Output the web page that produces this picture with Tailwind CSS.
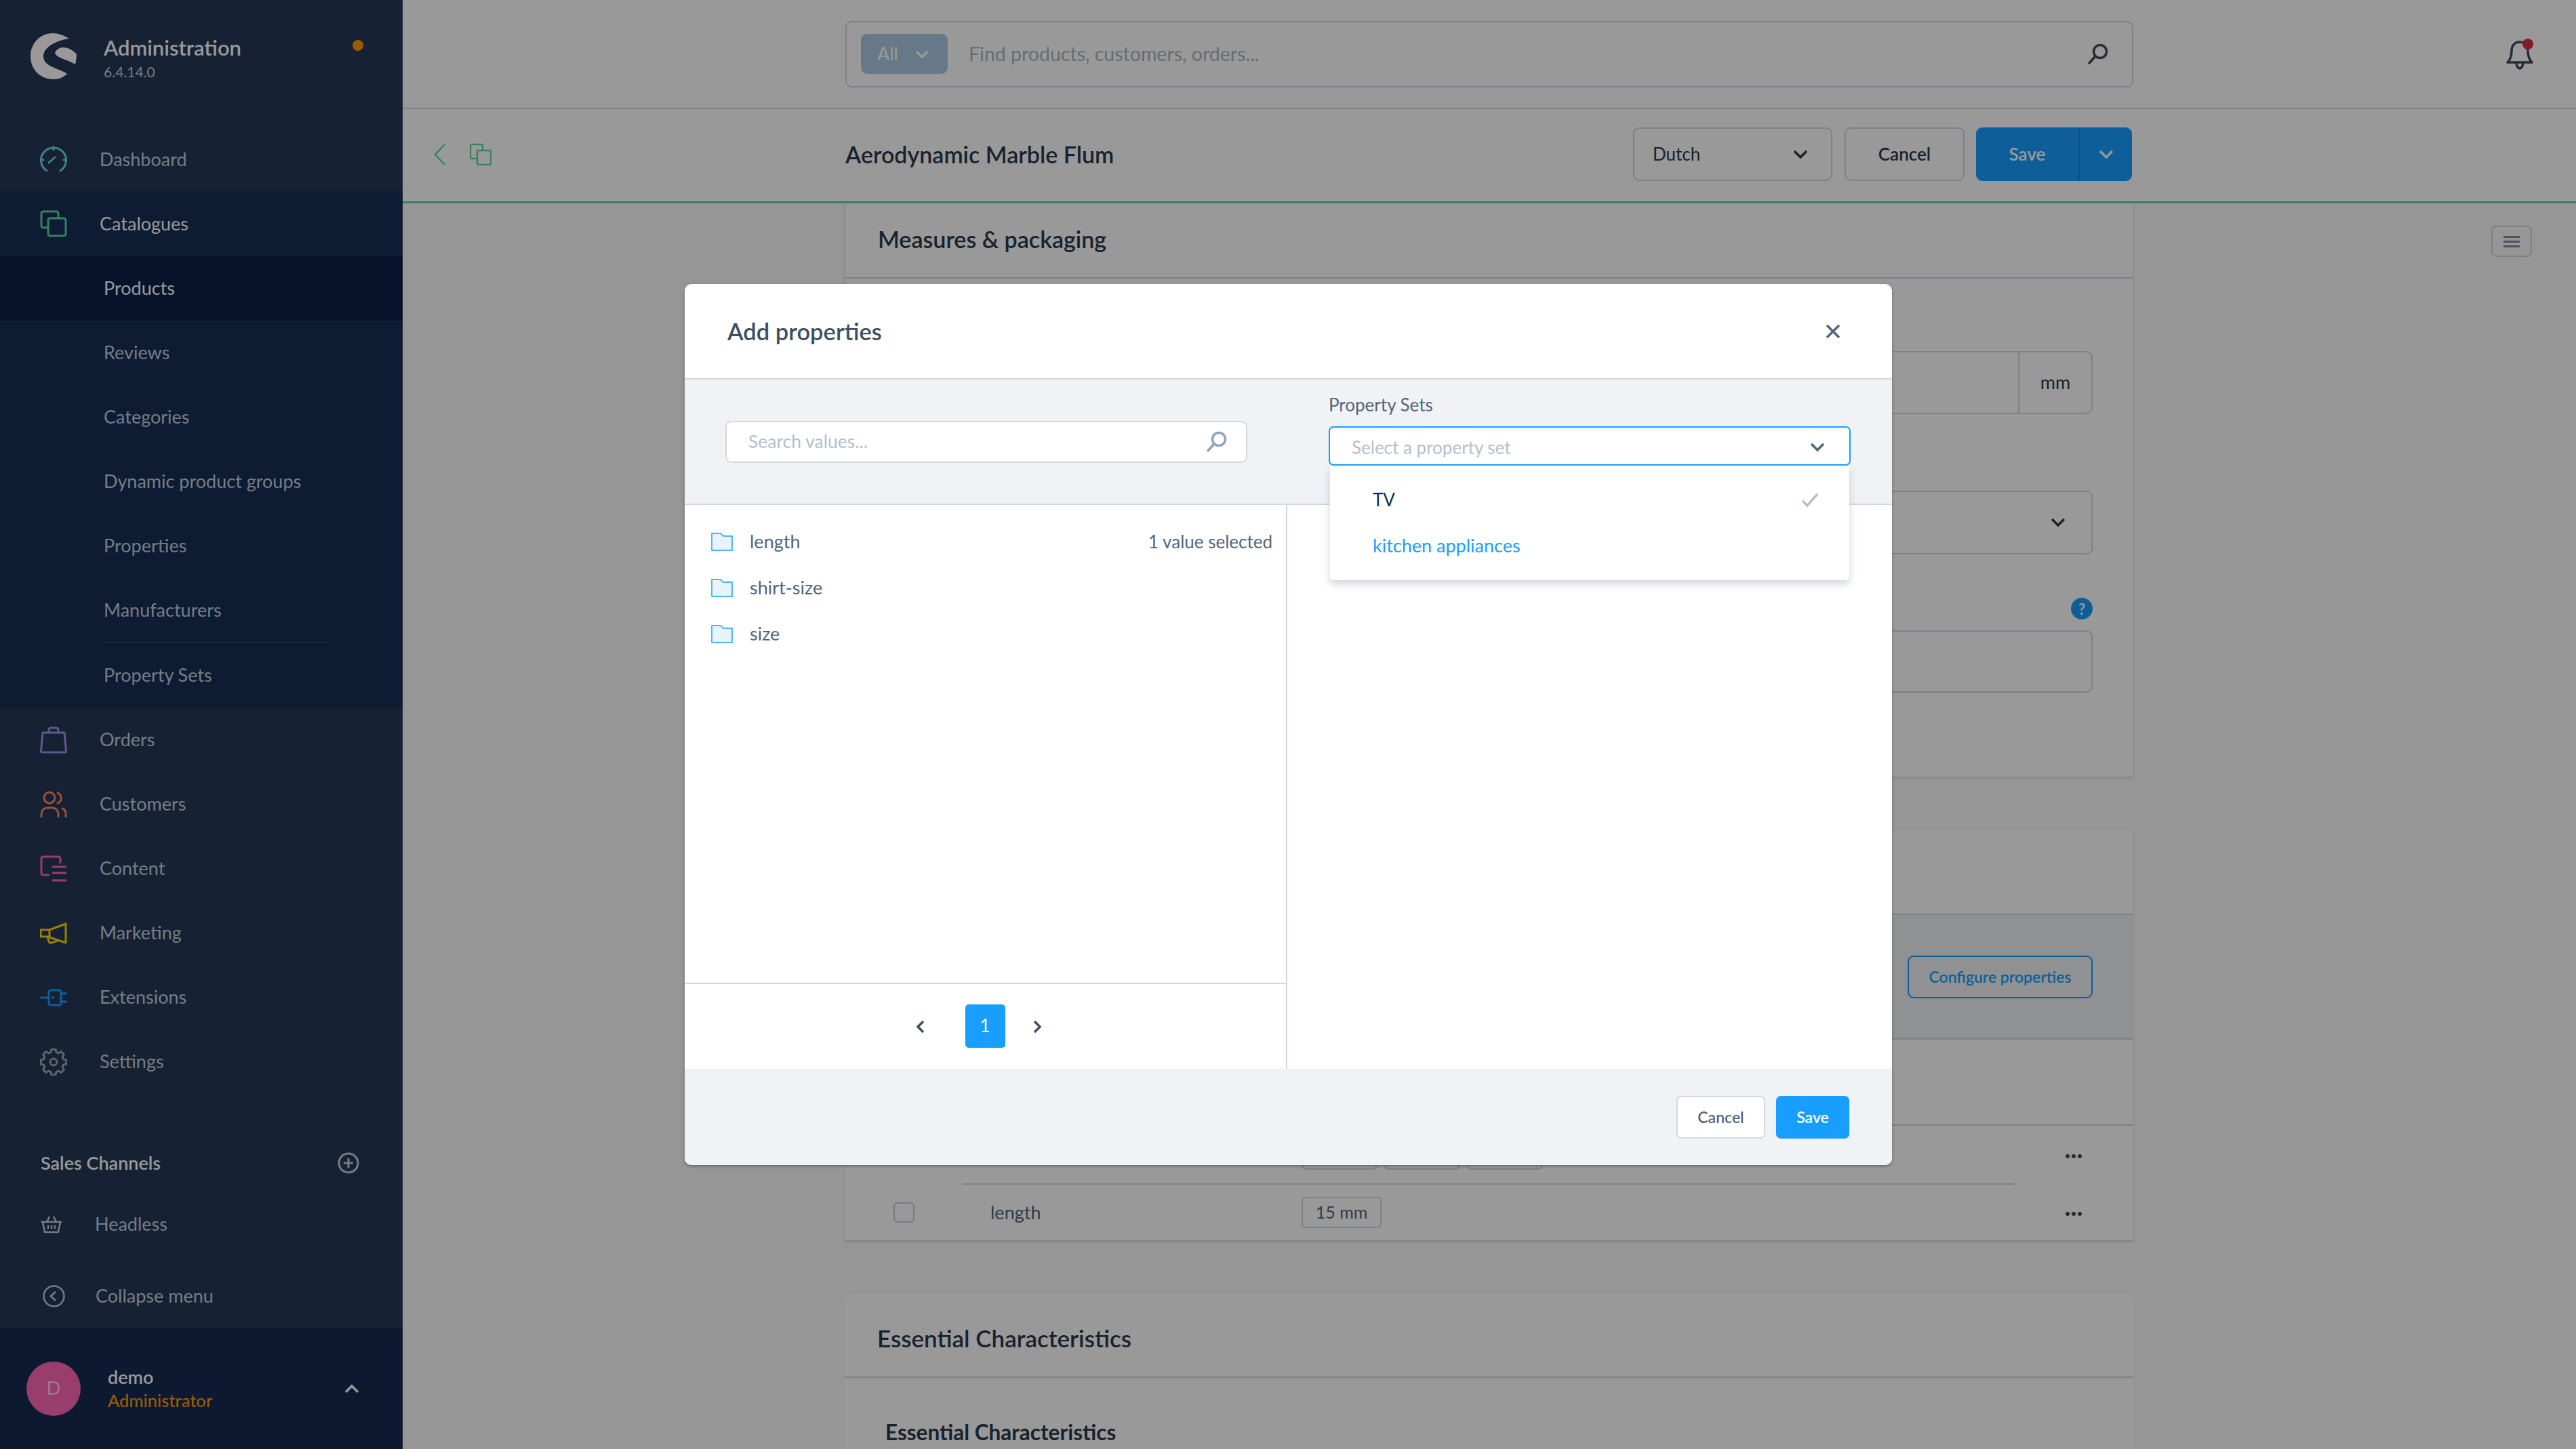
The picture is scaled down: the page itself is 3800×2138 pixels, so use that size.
<!DOCTYPE html>
<html lang="en">
<head>
<meta charset="utf-8">
<title>Add properties</title>
<script src="https://cdn.jsdelivr.net/npm/@tailwindcss/browser@4"></script>
</head>
<body class="m-0">
<div class="relative flex h-[2138px] w-[3800px] overflow-hidden bg-[#fafafa] font-['Lato','Noto_Sans',sans-serif] text-[27px] text-[#52667a]">

  <!-- Sidebar -->
  <aside class="flex h-full w-[594px] shrink-0 flex-col bg-[#253857] text-[27px] text-[#c2d0e0]">
    <div class="flex h-[188px] shrink-0 items-start pl-[45px] pr-[58px] pt-[49px]">
      <svg class="h-[68px] w-[68px] shrink-0" viewBox="0 0 68 68" fill="#fff"><path d="M57 8C49 3 41 0 33 0 14 0 0 15 0 34c0 20 15 34 34 34 8 0 15-3 20-8C44 52 19 50 19 34 19 20 40 10 57 8z"/><path d="M36 29c2-5 7-8 12-8 8 0 16 5 20 10 0 5-1 10-2 15-8-6-28-9-30-17z"/></svg>
      <div class="ml-[40px] flex flex-col">
        <span class="mt-[2px] text-[31px] font-semibold leading-[38px] text-white">Administration</span>
        <span class="text-[21px] leading-[34px] text-[#c5ccd6]">6.4.14.0</span>
      </div>
      <span class="ml-auto mt-[10px] h-[16px] w-[16px] rounded-full bg-[#ff9a00]"></span>
    </div>

    <nav class="flex flex-col">
      <div class="flex h-[94px] items-center pl-[59px]">
        <svg class="h-[40px] w-[40px] shrink-0" viewBox="0 0 40 40" fill="none" stroke="#6ad6f0" stroke-width="3" stroke-linecap="round"><path d="M10 37A18.5 18.5 0 1 1 30 37"/><path d="M20 2v4M13 25l9-8M2 21h3M35 21h3"/></svg>
        <span class="ml-[48px]">Dashboard</span>
      </div>
      <div class="bg-[#172d55]">
        <div class="flex h-[96px] items-center pl-[59px] text-white">
          <svg class="h-[40px] w-[40px] shrink-0" viewBox="0 0 40 40" fill="none" stroke="#57d9a3" stroke-width="3" stroke-linejoin="round"><path d="M12 26H5a3 3 0 0 1-3-3V5a3 3 0 0 1 3-3h19a3 3 0 0 1 3 3v7"/><rect x="12" y="12" width="26" height="26" rx="3"/></svg>
          <span class="ml-[48px]">Catalogues</span>
        </div>
        <div class="flex h-[95px] items-center bg-[#0c2149] pl-[153px] text-white">Products</div>
        <div class="flex h-[95px] items-center pl-[153px]">Reviews</div>
        <div class="flex h-[95px] items-center pl-[153px]">Categories</div>
        <div class="flex h-[95px] items-center pl-[153px]">Dynamic product groups</div>
        <div class="flex h-[95px] items-center pl-[153px]">Properties</div>
        <div class="ml-[153px] mr-[108px] flex h-[96px] items-center border-b-2 border-[#2f4468]">Manufacturers</div>
        <div class="flex h-[95px] items-center pl-[153px]">Property Sets</div>
      </div>
      <div class="flex h-[95px] items-center pl-[59px]">
        <svg class="h-[40px] w-[40px] shrink-0" viewBox="0 0 40 40" fill="none" stroke="#a092f0" stroke-width="3" stroke-linejoin="round"><path d="M4 9h32l2.500 27a2 2 0 0 1-2 2H3.500a2 2 0 0 1-2-2z"/><path d="M13 9V5a3 3 0 0 1 3-3h8a3 3 0 0 1 3 3v4"/></svg>
        <span class="ml-[48px]">Orders</span>
      </div>
      <div class="flex h-[95px] items-center pl-[59px]">
        <svg class="h-[40px] w-[40px] shrink-0" viewBox="0 0 40 40" fill="none" stroke="#f88962" stroke-width="3" stroke-linecap="round"><circle cx="14" cy="10" r="8"/><path d="M2 38v-4a9 9 0 0 1 9-9h7a9 9 0 0 1 9 9v4"/><path d="M26 3a8 8 0 0 1 0 15M33 26a8 8 0 0 1 5 8v4"/></svg>
        <span class="ml-[48px]">Customers</span>
      </div>
      <div class="flex h-[95px] items-center pl-[59px]">
        <svg class="h-[40px] w-[40px] shrink-0" viewBox="0 0 40 40" fill="none" stroke="#ff68b4" stroke-width="3" stroke-linejoin="round"><path d="M30 12V5a3 3 0 0 0-3-3H5a3 3 0 0 0-3 3v21a3 3 0 0 0 3 3h9"/><path d="M18 17h21M18 26h21M18 37h21"/></svg>
        <span class="ml-[48px]">Content</span>
      </div>
      <div class="flex h-[95px] items-center pl-[59px]">
        <svg class="h-[40px] w-[40px] shrink-0" viewBox="0 0 40 40" fill="none" stroke="#ffd700" stroke-width="3" stroke-linejoin="round"><path d="M1 15h13v10H1zM14 15l24-9v28l-24-8z"/><path d="M11 25l2 7a3 3 0 0 0 4 2l9-3"/></svg>
        <span class="ml-[48px]">Marketing</span>
      </div>
      <div class="flex h-[95px] items-center pl-[59px]">
        <svg class="h-[40px] w-[40px] shrink-0" viewBox="0 0 40 40" fill="none" stroke="#189eff" stroke-width="3"><path d="M0 20h13M31 14h9M31 26h9"/><rect x="13" y="9" width="18" height="22" rx="3"/><circle cx="19" cy="20" r="2" fill="#189eff" stroke="none"/></svg>
        <span class="ml-[48px]">Extensions</span>
      </div>
      <div class="flex h-[95px] items-center pl-[59px]">
        <svg class="h-[40px] w-[40px] shrink-0" viewBox="0 0 40 40" fill="none" stroke="#9aa8b5" stroke-width="3" stroke-linejoin="round"><path d="M34.400 15.900L38.800 17V23L34.400 24.100 33.100 27.300 35.400 31.200 31.200 35.400 27.300 33.100 24.100 34.400 23 38.800H17L15.900 34.400 12.700 33.100 8.800 35.400 4.600 31.200 6.900 27.300 5.600 24.100 1.200 23V17L5.600 15.900 6.900 12.700 4.600 8.800 8.800 4.600 12.700 6.900 15.900 5.600 17 1.200H23L24.100 5.600 27.300 6.900 31.200 4.600 35.400 8.800 33.100 12.700z"/><circle cx="20" cy="20" r="5"/></svg>
        <span class="ml-[48px]">Settings</span>
      </div>
    </nav>

    <div class="mt-[78px] flex h-[48px] items-center pl-[60px] pr-[64px]">
      <span class="font-semibold text-white">Sales Channels</span>
      <svg class="ml-auto h-[32px] w-[32px]" viewBox="0 0 32 32" fill="none" stroke="#c2d0e0" stroke-width="3"><circle cx="16" cy="16" r="14"/><path d="M16 9v14M9 16h14"/></svg>
    </div>
    <div class="mt-[42px] flex h-[48px] items-center pl-[60px]">
      <svg class="h-[27px] w-[32px] shrink-0" viewBox="0 0 32 27" fill="none" stroke="#c2d0e0" stroke-width="2.500" stroke-linejoin="round"><path d="M1 10h30M3 10l3 15h20l3-15M9 10l4-8M23 10l-4-8M11 15v5M16 15v5M21 15v5"/></svg>
      <span class="ml-[48px]">Headless</span>
    </div>
    <div class="mt-[58px] flex h-[48px] items-center pl-[63px]">
      <svg class="h-[33px] w-[33px] shrink-0" viewBox="0 0 33 33" fill="none" stroke="#c2d0e0" stroke-width="2.500"><circle cx="16.500" cy="16.500" r="15"/><path d="M19 10l-7 6.500 7 6.500"/></svg>
      <span class="ml-[45px]">Collapse menu</span>
    </div>

    <div class="mt-auto flex h-[179px] shrink-0 items-center bg-[#152b53] pl-[39px] pr-[64px]">
      <span class="flex h-[80px] w-[80px] items-center justify-center rounded-full bg-[#ff68b4] text-[#fff]/70">D</span>
      <div class="ml-[40px] flex flex-col">
        <span class="font-semibold leading-[34px] text-white">demo</span>
        <span class="text-[25.500px] font-medium leading-[34px] text-[#ff9a00]">Administrator</span>
      </div>
      <svg class="ml-auto h-[14px] w-[22px]" viewBox="0 0 22 14" fill="none" stroke="#fff" stroke-width="3.500"><path d="M2 12l9-9 9 9"/></svg>
    </div>
  </aside>

  <!-- Main -->
  <main class="flex h-full min-w-0 flex-1 flex-col">
    <header class="flex h-[161px] shrink-0 items-center border-b-2 border-[#d1d9e0] bg-white">
      <div class="ml-[653px] flex h-[98px] w-[1900px] items-center rounded-[9px] border-2 border-[#d1d9e0] pl-[21px] pr-[34px]">
        <div class="flex h-[59px] w-[128px] items-center justify-between rounded-[9px] bg-[#acc8e3] pl-[24px] pr-[28px] text-white">
          <span>All</span>
          <svg class="h-[14px] w-[20px]" viewBox="0 0 20 14" fill="none" stroke="#fff" stroke-width="3.500"><path d="M2 3l8 8 8-8"/></svg>
        </div>
        <span class="ml-[31px] text-[28.500px] text-[#a8b6c5]">Find products, customers, orders...</span>
        <svg class="ml-auto h-[32px] w-[32px]" viewBox="0 0 32 32" fill="none" stroke="#3d4c5c" stroke-width="3.500" stroke-linecap="round"><circle cx="19" cy="12" r="9.500"/><path d="M12 19L3 29"/></svg>
      </div>
      <div class="relative ml-[550px] h-[46px] w-[40px]">
        <svg class="h-[46px] w-[40px]" viewBox="0 0 40 46" fill="none" stroke="#3d4c5c" stroke-width="3.500" stroke-linejoin="round"><path d="M20 5c-8 0-12 6-12 13 0 9-2 13-6 17h36c-4-4-6-8-6-17 0-7-4-13-12-13z"/><path d="M15 35c0 6 3 9 5 9s5-3 5-9"/></svg>
        <span class="absolute right-0 top-0 h-[16px] w-[16px] rounded-full bg-[#de294c]"></span>
      </div>
    </header>

    <div class="flex h-[139px] shrink-0 items-center border-b-[3px] border-[#57d9a3] bg-white pb-[3px]">
      <svg class="ml-[46px] h-[32px] w-[18px] shrink-0" viewBox="0 0 18 32" fill="none" stroke="#57d9a3" stroke-width="2.500"><path d="M16 1L2 16l14 15"/></svg>
      <svg class="ml-[35px] h-[32px] w-[32px] shrink-0" viewBox="0 0 32 32" fill="none" stroke="#57d9a3" stroke-width="2.500" stroke-linejoin="round"><path d="M10 22H3a2 2 0 0 1-2-2V3a2 2 0 0 1 2-2h14a2 2 0 0 1 2 2v7"/><rect x="11" y="10" width="20" height="21" rx="2"/></svg>
      <h1 class="ml-[522px] w-[1162px] text-[34px] font-semibold text-[#2b3a4e]">Aerodynamic Marble Flum</h1>
      <div class="flex h-[79px] w-[294px] items-center justify-between rounded-[9px] border-2 border-[#d1d9e0] pl-[27px] pr-[34px] text-[26px] text-[#2b3a4e]">
        <span>Dutch</span>
        <svg class="h-[14px] w-[22px]" viewBox="0 0 22 14" fill="none" stroke="#2b3a4e" stroke-width="3.500"><path d="M2 2l9 9 9-9"/></svg>
      </div>
      <div class="ml-[18px] flex h-[79px] w-[177px] items-center justify-center rounded-[9px] border-2 border-[#d1d9e0] text-[26px] font-semibold text-[#2b3a4e]">Cancel</div>
      <div class="ml-[17px] flex h-[79px] w-[230px] items-center rounded-[9px] bg-[#189eff] text-[26px] font-semibold text-white">
        <span class="flex h-full w-[153px] items-center justify-center border-r-2 border-[#1488dc]">Save</span>
        <span class="flex flex-1 items-center justify-center"><svg class="h-[14px] w-[22px]" viewBox="0 0 22 14" fill="none" stroke="#fff" stroke-width="3.500"><path d="M2 2l9 9 9-9"/></svg></span>
      </div>
    </div>

    <div class="relative min-h-0 flex-1 overflow-hidden">
      <span class="absolute left-[3081px] top-[33px] flex h-[46px] w-[60px] flex-col items-center justify-center gap-[4px] rounded-[7px] border-2 border-[#d1d9e0]">
        <i class="h-[3px] w-[24px] bg-[#758ca3]"></i><i class="h-[3px] w-[24px] bg-[#758ca3]"></i><i class="h-[3px] w-[24px] bg-[#758ca3]"></i>
      </span>

      <div class="ml-[652px] flex w-[1901px] flex-col">
        <!-- Card 1 -->
        <section class="flex h-[846px] flex-col border-x border-[#e0e6eb] bg-white shadow-[0_2px_3px_rgba(0,0,0,0.15)]">
          <div class="flex h-[111px] shrink-0 items-center border-b-2 border-[#d1d9e0] pb-[4px] pl-[48px] text-[34px] font-semibold text-[#2b3a4e]">Measures &amp; packaging</div>
          <div class="ml-[48px] mr-[59px] mt-[107px] flex h-[93px] items-center justify-end rounded-[9px] border-2 border-[#d1d9e0]">
            <span class="flex h-full w-[108px] items-center justify-center border-l-2 border-[#d1d9e0] text-[#2b3a4e]">mm</span>
          </div>
          <div class="ml-[48px] mr-[59px] mt-[113px] flex h-[94px] items-center justify-end rounded-[9px] border-2 border-[#d1d9e0] pr-[38px]">
            <svg class="h-[14px] w-[22px]" viewBox="0 0 22 14" fill="none" stroke="#2b3a4e" stroke-width="3.500"><path d="M2 2l9 9 9-9"/></svg>
          </div>
          <div class="mr-[59px] mt-[64px] flex h-[32px] justify-end">
            <span class="flex h-[32px] w-[32px] items-center justify-center rounded-full bg-[#189eff] text-[22px] font-bold text-white">?</span>
          </div>
          <div class="ml-[48px] mr-[59px] mt-[16px] h-[92px] rounded-[9px] border-2 border-[#d1d9e0]"></div>
        </section>

        <!-- Card 2 -->
        <section class="mt-[80px] flex h-[604px] flex-col rounded-t-[10px] bg-white shadow-[0_2px_3px_rgba(0,0,0,0.15)]">
          <div class="h-[124px] shrink-0 border-b-2 border-[#d1d9e0]"></div>
          <div class="flex h-[184px] shrink-0 items-center justify-end border-b-2 border-[#d1d9e0] bg-[#f0f2f5] pr-[60px]">
            <span class="flex h-[63px] w-[273px] items-center justify-center rounded-[9px] border-2 border-[#189eff] text-[23px] font-semibold text-[#189eff]">Configure properties</span>
          </div>
          <div class="h-[127px] shrink-0 border-b-2 border-[#d1d9e0]"></div>
          <div class="relative flex h-[65px] shrink-0 items-end pl-[675px]">
            <div class="flex gap-[12px]"><span class="h-[40px] w-[110px] rounded-[5px] border-2 border-[#d1d9e0]"></span><span class="h-[40px] w-[110px] rounded-[5px] border-2 border-[#d1d9e0]"></span><span class="h-[40px] w-[110px] rounded-[5px] border-2 border-[#d1d9e0]"></span></div>
            <span class="absolute right-[76px] top-[42px] flex gap-[3px]"><i class="h-[6px] w-[6px] rounded-full bg-[#3d4c5c]"></i><i class="h-[6px] w-[6px] rounded-full bg-[#3d4c5c]"></i><i class="h-[6px] w-[6px] rounded-full bg-[#3d4c5c]"></i></span>
          </div>
          <div class="ml-[174px] mr-[175px] mt-[20px] border-b-2 border-[#d1d9e0]"></div>
          <div class="relative flex min-h-0 flex-1 items-center pl-[72px]">
            <span class="h-[30px] w-[31px] rounded-[6px] border-2 border-[#c4ced8]"></span>
            <span class="ml-[112px] w-[459px] text-[#52667a]">length</span>
            <span class="flex h-[46px] w-[118px] items-center justify-center rounded-[5px] border-2 border-[#d1d9e0] text-[25px] text-[#52667a]">15 mm</span>
            <span class="absolute right-[76px] top-[40px] flex gap-[3px]"><i class="h-[6px] w-[6px] rounded-full bg-[#3d4c5c]"></i><i class="h-[6px] w-[6px] rounded-full bg-[#3d4c5c]"></i><i class="h-[6px] w-[6px] rounded-full bg-[#3d4c5c]"></i></span>
          </div>
        </section>

        <!-- Card 3 -->
        <section class="mt-[79px] flex h-[400px] flex-col rounded-t-[14px] bg-white">
          <div class="flex h-[124px] shrink-0 items-center border-b-2 border-[#d1d9e0] pl-[48px] pt-[8px] text-[35px] font-semibold text-[#2b3a4e]">Essential Characteristics</div>
          <div class="ml-[60px] mt-[58px] text-[31.500px] font-bold leading-[44px] text-[#2b3a4e]">Essential Characteristics</div>
        </section>
      </div>
    </div>
  </main>

  <!-- Dimming layer -->
  <div class="absolute inset-0 bg-black/40"></div>

  <!-- Modal -->
  <div class="absolute left-[1010px] top-[419px] flex h-[1300px] w-[1781px] flex-col overflow-visible rounded-[10px] bg-white shadow-[0_2px_4px_rgba(0,0,0,0.3)]">
    <div class="flex h-[141px] shrink-0 items-center justify-between border-b-2 border-[#d1d9e0] pl-[63px] pr-[76px]">
      <h2 class="text-[34.500px] font-semibold text-[#3d4f63]">Add properties</h2>
      <svg class="h-[22px] w-[22px]" viewBox="0 0 22 22" fill="none" stroke="#52667a" stroke-width="3.500"><path d="M2 2l18 18M20 2L2 20"/></svg>
    </div>
    <div class="flex h-[185px] shrink-0 border-b-2 border-[#d1d9e0] bg-[#f0f2f5]">
      <div class="w-[889px] pl-[60px] pt-[61px]">
        <div class="flex h-[62px] w-[770px] items-center justify-between rounded-[9px] border-2 border-[#d1d9e0] bg-white pl-[32px] pr-[27px]">
          <span class="text-[26.500px] text-[#b3bfcc]">Search values...</span>
          <svg class="h-[32px] w-[32px]" viewBox="0 0 32 32" fill="none" stroke="#8ea3b8" stroke-width="3.500" stroke-linecap="round"><circle cx="19" cy="12" r="9.500"/><path d="M12 19L3 29"/></svg>
        </div>
      </div>
      <div class="flex flex-1 flex-col pl-[61px] pt-[18px]">
        <span class="text-[26px] leading-[38px] text-[#52667a]">Property Sets</span>
      </div>
    </div>
    <div class="flex min-h-0 flex-1">
      <div class="flex w-[889px] flex-col border-r-2 border-[#d1d9e0]">
        <div class="flex-1 pl-[39px] pr-[20px] pt-[20px]">
          <div class="flex h-[68px] items-center"><svg class="h-[27px] w-[32px]" viewBox="0 0 32 27" fill="#e6f4ff" stroke="#189eff" stroke-width="1.500"><path d="M1 1h13l4 4h13v21H1z"/></svg><span class="ml-[25px]">length</span><span class="ml-auto text-[26px]">1 value selected</span></div>
          <div class="flex h-[68px] items-center"><svg class="h-[27px] w-[32px]" viewBox="0 0 32 27" fill="#e6f4ff" stroke="#189eff" stroke-width="1.500"><path d="M1 1h13l4 4h13v21H1z"/></svg><span class="ml-[25px]">shirt-size</span></div>
          <div class="flex h-[68px] items-center"><svg class="h-[27px] w-[32px]" viewBox="0 0 32 27" fill="#e6f4ff" stroke="#189eff" stroke-width="1.500"><path d="M1 1h13l4 4h13v21H1z"/></svg><span class="ml-[25px]">size</span></div>
        </div>
        <div class="flex h-[127px] shrink-0 items-center justify-center border-t-2 border-[#d1d9e0] pb-[2px] pr-[20px]">
          <svg class="mt-[2px] h-[20px] w-[13px]" viewBox="0 0 13 20" fill="none" stroke="#3d4f63" stroke-width="3.500"><path d="M11 2l-8 8 8 8"/></svg>
          <span class="ml-[60px] flex h-[64px] w-[59px] items-center justify-center rounded-[5px] bg-[#189eff] text-[26px] text-white">1</span>
          <svg class="ml-[41px] mt-[2px] h-[20px] w-[13px]" viewBox="0 0 13 20" fill="none" stroke="#3d4f63" stroke-width="3.500"><path d="M2 2l8 8-8 8"/></svg>
        </div>
      </div>
      <div class="flex-1"></div>
    </div>
    <div class="flex h-[142px] shrink-0 items-center justify-end gap-[16px] rounded-b-[10px] bg-[#f0f2f5] pr-[63px] text-[23px] font-semibold">
      <span class="flex h-[63px] w-[131px] items-center justify-center rounded-[7px] border-2 border-[#d1d9e0] bg-white text-[#52667a]">Cancel</span>
      <span class="flex h-[63px] w-[108px] items-center justify-center rounded-[7px] bg-[#189eff] text-white">Save</span>
    </div>

    <!-- Open select with its dropdown -->
    <div class="absolute left-[950px] top-[210px] w-[770px] text-[27px]">
      <div class="flex h-[58px] items-center justify-between rounded-[7px] border-2 border-[#189eff] bg-white pl-[32px] pr-[36px]">
        <span class="mt-[4px] text-[26px] text-[#b3bfcc]">Select a property set</span>
        <svg class="mt-[4px] h-[14px] w-[22px]" viewBox="0 0 22 14" fill="none" stroke="#52667a" stroke-width="3.500"><path d="M2 2l9 9 9-9"/></svg>
      </div>
      <div class="relative mx-[2px] flex h-[169px] flex-col justify-center rounded-b-[5px] bg-white pl-[63px] pr-[45px] shadow-[0_6px_12px_rgba(120,138,155,0.35)]">
        <div class="flex h-[68px] items-center justify-between text-[26px] text-[#0f2e4d]">
          <span>TV</span>
          <svg class="h-[22px] w-[26px]" viewBox="0 0 26 22" fill="none" stroke="#b3bfcc" stroke-width="3.500"><path d="M2 12l7 7L24 2"/></svg>
        </div>
        <div class="flex h-[68px] items-center text-[#189eff]">kitchen appliances</div>
      </div>
    </div>
  </div>
</div>
</body>
</html>
